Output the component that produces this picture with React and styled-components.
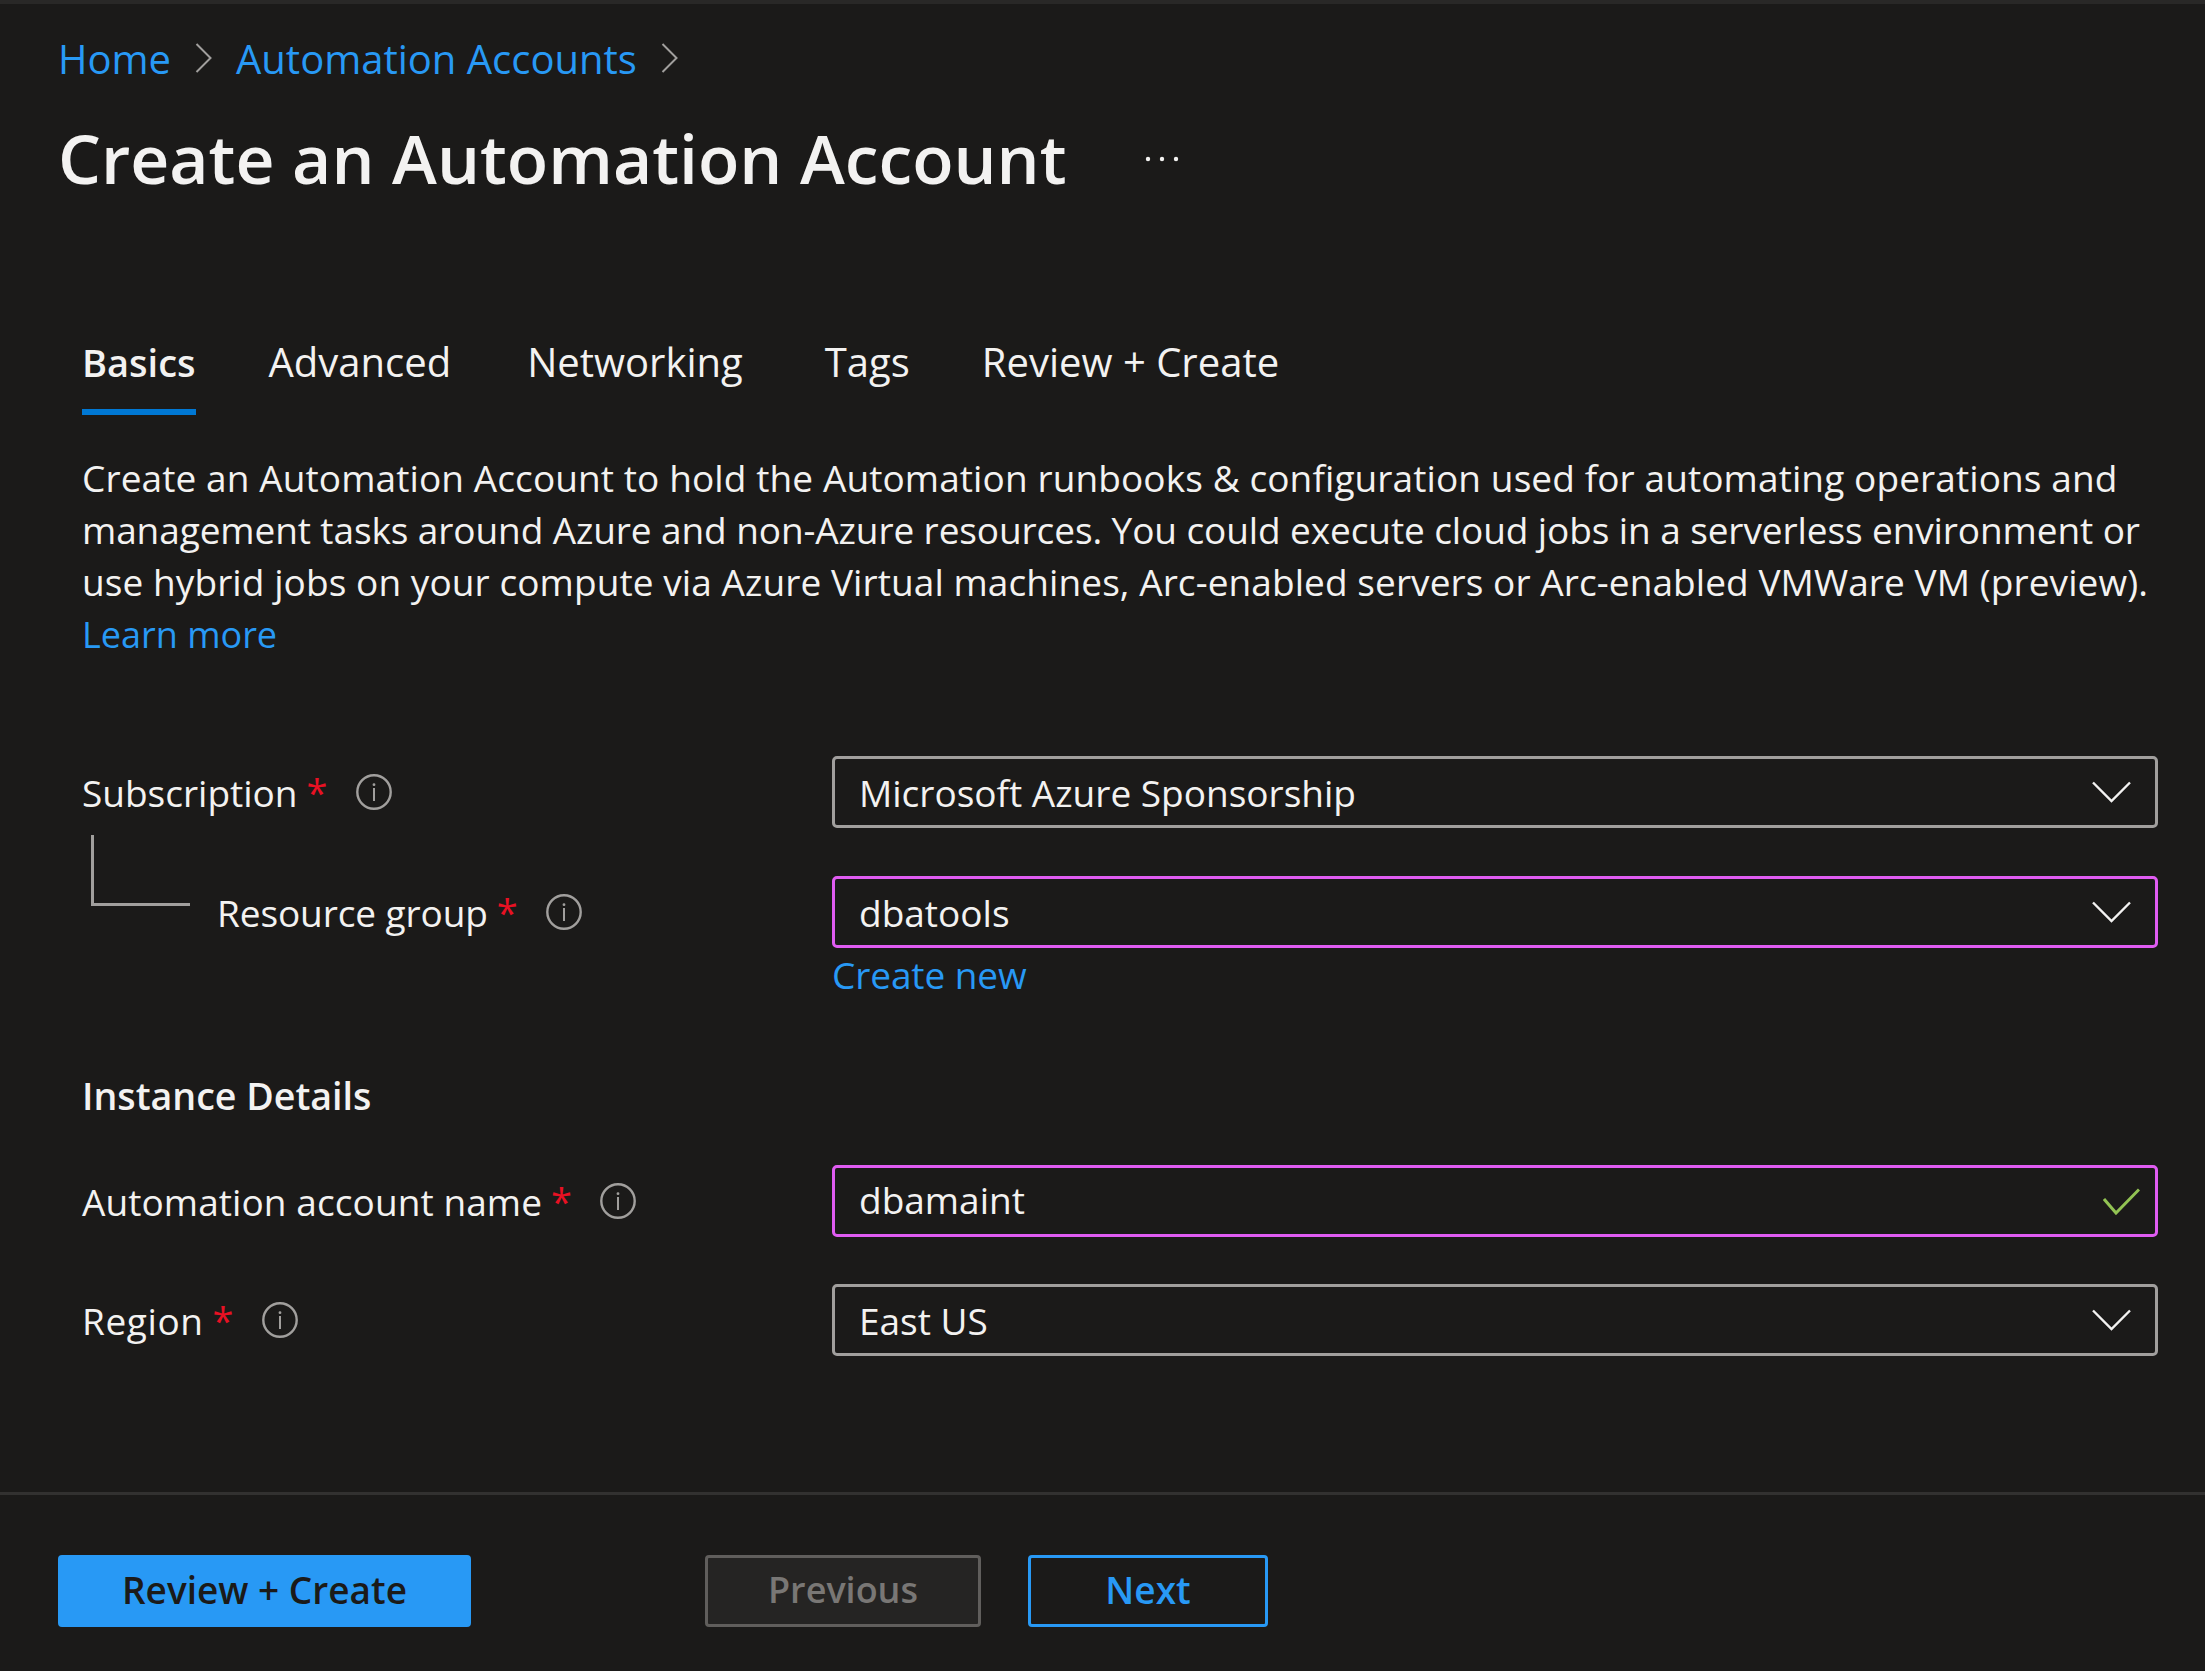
import React from 'react';
import styled, {createGlobalStyle} from 'styled-components';

const GlobalStyle = createGlobalStyle`
    html, body {
        margin: 0;
        padding: 0;
        background: #1b1a19;
    }
    body {
        font-family: "Open Sans", "Noto Sans", sans-serif;
        color: #f3f2f1;
    }
`
const Page = styled.div`
    display: flex;
    flex-direction: column;
    min-height: 1671px;
    box-sizing: border-box;
    border-top: 4px solid #292827;
    background: #1b1a19;
`
const Breadcrumb = styled.nav`
    display: flex;
    align-items: center;
    gap: 24px;
    margin: 31px 0 0 58px;
    height: 46px;
    font-size: 40px;
`
const A = styled.a`
    color: #2899f5;
    text-decoration: none;
`
const LearnMore = styled(A)`
    font-size: 36px;
`
const TitleRow = styled.div`
    display: flex;
    align-items: center;
    margin: 32px 0 0 58px;
    height: 90px;
`
const Title = styled.h1`
    margin: 0;
    font-size: 67.8px;
    font-weight: 600;
    line-height: 90px;
    color: #f3f2f1;
`
const More = styled.svg`
    margin: 2px 0 0 78px;
`
const Tabs = styled.div`
    display: flex;
    margin: 134px 0 0 82px;
`
const Tab = styled.div`
    height: 50px;
    line-height: 50px;
    font-size: ${p => p.$active ? 38 : 40}px;
    padding-bottom: 22px;
    margin-right: ${p => p.$gap || 0}px;
    font-weight: ${p => p.$active ? 600 : 400};
    border-bottom: 6px solid ${p => p.$active ? '#0078d4' : 'transparent'};
`
const Description = styled.div`
    margin: 37px 0 0 82px;
    font-size: 37px;
    line-height: 52px;
    white-space: nowrap;
`
const Line = styled.div`
    letter-spacing: ${p => p.$spacing}px;
`
const Form = styled.div`
    margin: 95px 0 0 82px;
    width: 2076px;
`
const Row = styled.div`
    display: grid;
    grid-template-columns: 750px 1326px;
    height: 72px;
    margin-top: ${p => p.$top || 0}px;
`
const LabelCell = styled.div`
    display: flex;
    align-items: center;
    font-size: 37px;
`
const LabelText = styled.span`
    letter-spacing: ${p => p.$spacing || 0}px;
`
const Connector = styled.div`
    align-self: flex-start;
    box-sizing: border-box;
    width: 99px;
    height: 71px;
    margin: -41px 27px 0 9px;
    border-left: 3px solid #a19f9d;
    border-bottom: 3px solid #a19f9d;
`
const Star = styled.span`
    color: #e81123;
    margin-left: 9px;
    font-size: 38px;
    line-height: 1;
`
const InfoIcon = styled.svg`
    margin-left: 28px;
    flex: none;
`
const Field = styled.div`
    display: flex;
    align-items: center;
    justify-content: space-between;
    box-sizing: border-box;
    height: 72px;
    padding: 0 24px ${p => p.$raised ? 4 : 0}px;
    font-size: 37px;
    border: 3px solid ${p => p.$focus ? '#e05cf2' : '#a19f9d'};
    border-radius: 5px;
`
const CheckIcon = styled.svg`
    margin: 0 -9px -4px 0;
`
const HelperRow = styled.div`
    display: grid;
    grid-template-columns: 750px 1326px;
    margin-top: 1px;
    font-size: 37px;
    letter-spacing: -0.1px;
    line-height: 52px;
`
const SectionTitle = styled.h2`
    margin: 69px 0 0;
    font-size: 37.6px;
    font-weight: 600;
    line-height: 52px;
`
const Footer = styled.div`
    display: flex;
    margin-top: auto;
    padding: 60px 0 44px 58px;
    border-top: 3px solid #323130;
`
const Button = styled.button`
    box-sizing: border-box;
    height: 72px;
    width: ${p => p.$w}px;
    margin-left: ${p => p.$left || 0}px;
    padding: 0 0 4px;
    font-family: inherit;
    font-size: ${p => p.$size || 37}px;
    font-weight: 600;
    border-radius: 4px;
    border: 3px solid ${p => p.$border};
    background: ${p => p.$bg};
    color: ${p => p.$color};
`

function Chevron() {
    return (
        <svg width="39" height="22" viewBox="0 0 39 22" fill="none">
            <path d="M1 1.5 L19.5 20 L38 1.5" stroke="#f3f2f1" strokeWidth="2.4"/>
        </svg>
    )
}

function Crumb() {
    return (
        <svg width="17" height="30" viewBox="0 0 17 30" fill="none">
            <path d="M1.5 1 L15.5 15 L1.5 29" stroke="#a19f9d" strokeWidth="2"/>
        </svg>
    )
}

function Check() {
    return (
        <CheckIcon width="37" height="27" viewBox="0 0 37 27" fill="none">
            <path d="M1 11 L13 25 L36 1.5" stroke="#92c353" strokeWidth="3"/>
        </CheckIcon>
    )
}

function Info() {
    return (
        <InfoIcon width="36" height="36" viewBox="0 0 36 36" fill="none">
            <circle cx="18" cy="18" r="16.7" stroke="#a19f9d" strokeWidth="2.4"/>
            <circle cx="18" cy="10.7" r="1.4" fill="#a19f9d"/>
            <rect x="17" y="14" width="2" height="13" fill="#a19f9d"/>
        </InfoIcon>
    )
}

function FieldLabel({children, spacing}) {
    return (
        <>
            <LabelText $spacing={spacing}>{children}</LabelText>
            <Star>*</Star>
            <Info/>
        </>
    )
}

export default function App() {
    return (
        <Page>
            <GlobalStyle/>
            <Breadcrumb>
                <A href="#">Home</A>
                <Crumb/>
                <A href="#">Automation Accounts</A>
                <Crumb/>
            </Breadcrumb>
            <TitleRow>
                <Title>Create an Automation Account</Title>
                <More width="36" height="8" viewBox="0 0 36 8" fill="#f3f2f1">
                    <circle cx="4" cy="4" r="2.2"/>
                    <circle cx="18" cy="4" r="2.2"/>
                    <circle cx="32" cy="4" r="2.2"/>
                </More>
            </TitleRow>
            <Tabs>
                <Tab $active $gap={73}>Basics</Tab>
                <Tab $gap={76}>Advanced</Tab>
                <Tab $gap={82}>Networking</Tab>
                <Tab $gap={72}>Tags</Tab>
                <Tab>Review + Create</Tab>
            </Tabs>
            <Description>
                <Line $spacing={0.1}>Create an Automation Account to hold the Automation runbooks &amp; configuration used for automating operations and</Line>
                <Line $spacing={-0.1}>management tasks around Azure and non-Azure resources. You could execute cloud jobs in a serverless environment or</Line>
                <Line $spacing={0.08}>use hybrid jobs on your compute via Azure Virtual machines, Arc-enabled servers or Arc-enabled VMWare VM (preview).</Line>
                <Line $spacing={0}><LearnMore href="#">Learn more</LearnMore></Line>
            </Description>
            <Form>
                <Row>
                    <LabelCell><FieldLabel>Subscription</FieldLabel></LabelCell>
                    <Field>Microsoft Azure Sponsorship<Chevron/></Field>
                </Row>
                <Row $top={48}>
                    <LabelCell>
                        <Connector/>
                        <FieldLabel spacing={-0.1}>Resource group</FieldLabel>
                    </LabelCell>
                    <Field $focus>dbatools<Chevron/></Field>
                </Row>
                <HelperRow>
                    <span/>
                    <A href="#">Create new</A>
                </HelperRow>
                <SectionTitle>Instance Details</SectionTitle>
                <Row $top={43}>
                    <LabelCell><FieldLabel spacing={0.08}>Automation account name</FieldLabel></LabelCell>
                    <Field $focus $raised>dbamaint<Check/></Field>
                </Row>
                <Row $top={47}>
                    <LabelCell><FieldLabel spacing={0.6}>Region</FieldLabel></LabelCell>
                    <Field>East US<Chevron/></Field>
                </Row>
            </Form>
            <Footer>
                <Button $w={413} $bg="#2899f5" $border="#2899f5" $color="#1b1a19">Review + Create</Button>
                <Button $w={276} $left={234} $size={36} $bg="#252423" $border="#605e5c" $color="#797775">Previous</Button>
                <Button $w={240} $left={47} $bg="transparent" $border="#2899f5" $color="#2899f5">Next</Button>
            </Footer>
        </Page>
    )
}
